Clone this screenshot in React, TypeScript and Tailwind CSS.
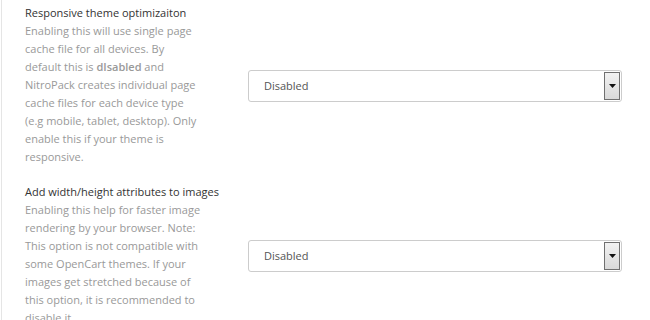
import React from "react";

function Select() {
  return (
    <div className="relative h-[32px] w-[374px] rounded-[3px] border border-[#cccccc] bg-white">
      <span className="absolute left-[15px] top-[7px] text-[11px] leading-[16px] text-[#555555]">Disabled</span>
      <div className="absolute right-[1px] top-[1px] flex h-[28px] w-[16px] items-center justify-center border border-[#707070] bg-gradient-to-b from-[#f2f2f2] to-[#d9d9d9]">
        <svg width="7" height="4" viewBox="0 0 7 4">
          <path d="M0 0 H7 L3.5 4 Z" fill="#111" />
        </svg>
      </div>
    </div>
  );
}

function Row({
  title,
  children,
  selectClass,
}: {
  title: string;
  children: React.ReactNode;
  selectClass: string;
}) {
  return (
    <div className="flex items-center">
      <div className="w-[233px] shrink-0 whitespace-nowrap pl-[23px] pr-[4px] text-[11px] leading-[18px]">
        <div className="text-[#333333]">{title}</div>
        <div className="text-[#999999]">{children}</div>
      </div>
      <div className={selectClass}>
        <Select />
      </div>
    </div>
  );
}

export default function App() {
  return (
    <div
      className="h-[320px] w-[650px] overflow-hidden bg-white"
      style={{ fontFamily: '"Open Sans", sans-serif' }}
    >
      <div className="ml-[1px] flex h-full flex-col gap-[17px] border-l border-[#e5e5e5] pt-[4px]">
        <Row title="Responsive theme optimizaiton" selectClass="pl-[13px] pt-[2px]">
          Enabling this will use single page
          <br />
          cache file for all devices. By
          <br />
          default this is <b className="font-semibold">dIsabled</b> and
          <br />
          NitroPack creates individual page
          <br />
          cache files for each device type
          <br />
          (e.g mobile, tablet, desktop). Only
          <br />
          enable this if your theme is
          <br />
          responsive.
        </Row>
        <Row title="Add width/height attributes to images" selectClass="pl-[13px] pt-[2px]">
          Enabling this help for faster image
          <br />
          rendering by your browser. Note:
          <br />
          This option is not compatible with
          <br />
          some OpenCart themes. If your
          <br />
          images get stretched because of
          <br />
          this option, it is recommended to
          <br />
          disable it.
        </Row>
      </div>
    </div>
  );
}
